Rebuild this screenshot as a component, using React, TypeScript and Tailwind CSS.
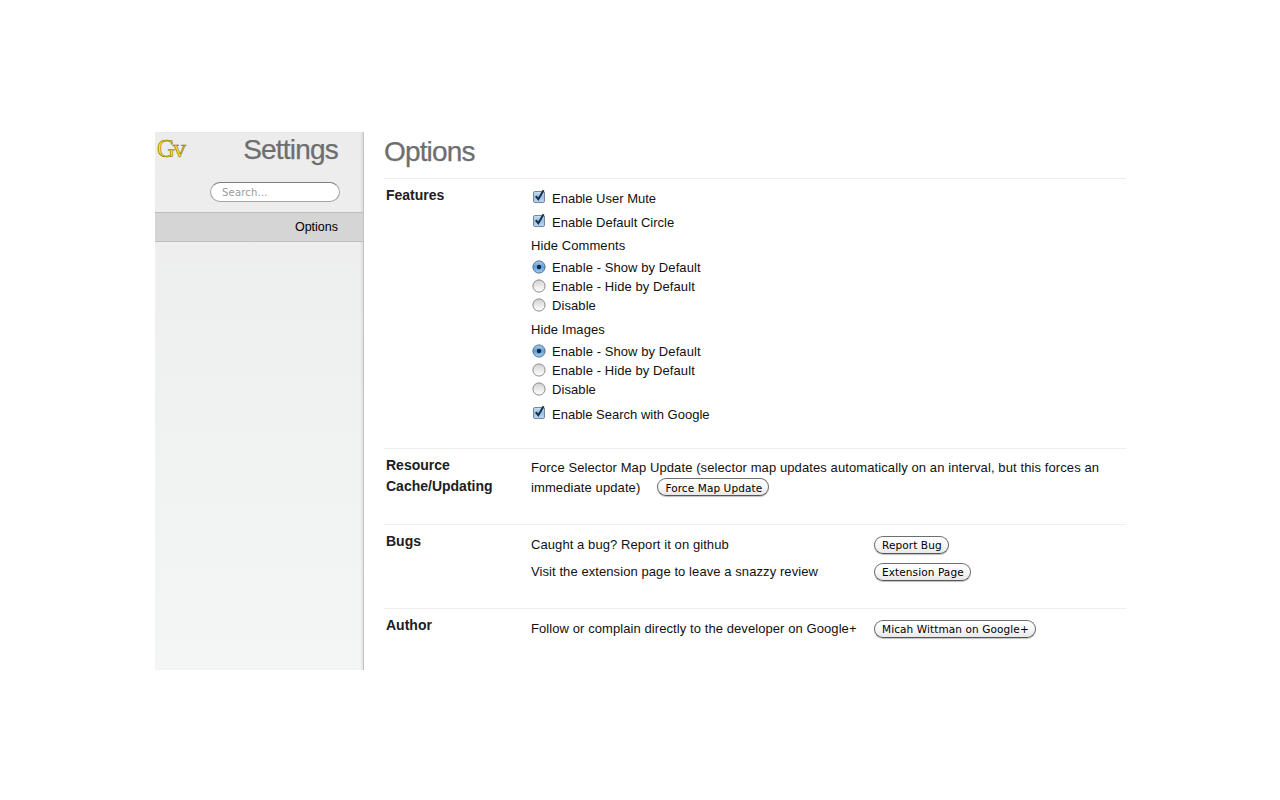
import type { ReactNode } from 'react';

function Checkbox() {
  return (
    <svg width="14" height="15" viewBox="0 0 14 15" className="mt-[-2px] shrink-0">
      <defs>
        <linearGradient id="cb" x1="0" y1="0" x2="0" y2="1">
          <stop offset="0" stopColor="#c8e0f5" />
          <stop offset="0.5" stopColor="#94c1ea" />
          <stop offset="1" stopColor="#bcdaf4" />
        </linearGradient>
      </defs>
      <rect x="1.5" y="2.5" width="11" height="11" rx="1.5" fill="url(#cb)" stroke="#74879b" />
      <path d="M3.8 7.2 L6.3 10.2 L11.6 1.2" fill="none" stroke="#1d2f42" strokeWidth="2" />
    </svg>
  );
}

function Radio({ on }: { on?: boolean }) {
  return (
    <svg width="14" height="14" viewBox="0 0 14 14" className="shrink-0">
      <defs>
        <linearGradient id="ron" x1="0" y1="0" x2="0" y2="1">
          <stop offset="0" stopColor="#a8cdee" />
          <stop offset="0.5" stopColor="#5f9fdb" />
          <stop offset="1" stopColor="#a5d0f3" />
        </linearGradient>
        <linearGradient id="roff" x1="0" y1="0" x2="0" y2="1">
          <stop offset="0" stopColor="#d0d0d0" />
          <stop offset="0.6" stopColor="#eeeeee" />
          <stop offset="1" stopColor="#ffffff" />
        </linearGradient>
      </defs>
      <circle cx="7" cy="7" r="6.1" fill={on ? 'url(#ron)' : 'url(#roff)'} stroke={on ? '#4f6f90' : '#8a8a8a'} />
      {on && <circle cx="7" cy="7" r="2.2" fill="#14263a" />}
    </svg>
  );
}

function Btn({ children }: { children: ReactNode }) {
  return (
    <button className="inline-flex h-[18px] items-center rounded-full border border-[#6e6e6e] border-b-[#555] bg-gradient-to-b from-white via-[#f8f8f8] to-[#e8e8e8] pt-[2px] pr-[6px] pl-[7px] font-['DejaVu_Sans',sans-serif] text-[10.5px] tracking-[0.1px] whitespace-nowrap text-black shadow-[0_1px_1px_rgba(0,0,0,0.25)]">
      {children}
    </button>
  );
}

function Section({ title, children, className }: { title: ReactNode; children: ReactNode; className: string }) {
  return (
    <section className={`flex border-t border-[#eeeeee] ${className}`}>
      <h3 className="w-[147px] shrink-0 pl-[2px] text-[14px] leading-[21px] font-bold text-[#202020]">{title}</h3>
      <div className="min-w-0 flex-1 text-[13px] tracking-[0.08px] text-[#111]">{children}</div>
    </section>
  );
}

function CheckRow({ label }: { label: string }) {
  return (
    <div className="flex h-[24px] items-center gap-[6px] pl-[1px]">
      <Checkbox />
      <span className="mt-[3px] tracking-normal">{label}</span>
    </div>
  );
}

function RadioGroup({ title }: { title: string }) {
  return (
    <div>
      <div className="flex h-[22px] items-center pt-[4px]">{title}</div>
      <div className="mt-[2px]">
        {['Enable - Show by Default', 'Enable - Hide by Default', 'Disable'].map((label, i) => (
          <div key={label} className="flex h-[19px] items-center gap-[6px] pl-[1px]">
            <Radio on={i === 0} />
            <span className="mt-[2px]">{label}</span>
          </div>
        ))}
      </div>
    </div>
  );
}

export default function App() {
  return (
    <div className="min-h-[800px] bg-white pt-[132px] pl-[155px] font-['Liberation_Sans',Arial,sans-serif]">
      <div className="flex h-[538px] w-[971px]">
        {/* sidebar */}
        <aside className="flex w-[209px] shrink-0 flex-col border-r border-[#c2c2c2] bg-gradient-to-b from-[#ececec] to-[#f4f6f6] shadow-[inset_-2px_0_2px_rgba(0,0,0,0.06)]">
          <div className="flex h-[50px] items-start justify-between pr-[25px]">
            <svg width="34" height="32" viewBox="0 0 34 32" className="mt-[1px] ml-[2px]">
              <text x="0" y="24" fontFamily="'Liberation Serif', serif" fontSize="25" fill="#ffe81a" stroke="#7a6c00" strokeWidth="0.6">
                G<tspan dx="-2" fontSize="26">v</tspan>
              </text>
            </svg>
            <h1 className="mt-[2px] text-[28px] leading-[32px] tracking-[-0.8px] text-[#6e6e6e] [-webkit-text-stroke:0.25px_#6e6e6e]">Settings</h1>
          </div>
          <div className="flex justify-end pr-[23px]">
            <div className="mb-[10px] flex h-[20px] w-[130px] items-center rounded-full border border-[#a3a3a3] border-t-[#7f7f7f] bg-white pl-[11px] font-['DejaVu_Sans',sans-serif] text-[10px] tracking-[0.2px] text-[#9a9a9a]">
              Search...
            </div>
          </div>
          <div className="flex h-[30px] items-center justify-end border-y border-[#bdbdbd] bg-[#d4d5d4] pr-[25px] text-[12.5px] text-black">
            Options
          </div>
        </aside>

        {/* main */}
        <main className="min-w-0 flex-1 pl-[20px]">
          <h2 className="h-[46px] pt-[3px] text-[28px] leading-[34px] tracking-[-0.85px] text-[#6e6e6e] [-webkit-text-stroke:0.25px_#6e6e6e]">Options</h2>

          <Section title="Features" className="h-[270px] pt-[6px]">
            <CheckRow label="Enable User Mute" />
            <CheckRow label="Enable Default Circle" />
            <RadioGroup title="Hide Comments" />
            <div className="mt-[3px]">
              <RadioGroup title="Hide Images" />
            </div>
            <div className="mt-[3px]">
              <CheckRow label="Enable Search with Google" />
            </div>
          </Section>

          <Section title={<>Resource<br />Cache/Updating</>} className="h-[76px] pt-[6px]">
            <p className="mt-[3px] leading-[20px] tracking-[0.1px]">
              Force Selector Map Update (selector map updates automatically on an interval, but this forces an immediate update)
              <span className="mb-[2px] ml-[17px] inline-block align-middle"><Btn>Force Map Update</Btn></span>
            </p>
          </Section>

          <Section title="Bugs" className="h-[84px] pt-[6px]">
            <div className="flex h-[27px] items-center">
              <span className="w-[343px] shrink-0">Caught a bug? Report it on github</span>
              <Btn>Report Bug</Btn>
            </div>
            <div className="flex h-[27px] items-center">
              <span className="w-[343px] shrink-0">Visit the extension page to leave a snazzy review</span>
              <Btn>Extension Page</Btn>
            </div>
          </Section>

          <Section title="Author" className="pt-[6px]">
            <div className="flex h-[27px] items-center">
              <span className="w-[343px] shrink-0">Follow or complain directly to the developer on Google+</span>
              <Btn>Micah Wittman on Google+</Btn>
            </div>
          </Section>
        </main>
      </div>
    </div>
  );
}
